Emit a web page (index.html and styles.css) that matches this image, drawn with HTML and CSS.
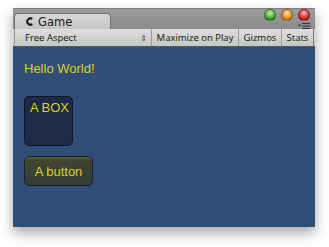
FILE: index.html
```html
<!DOCTYPE html>
<html lang="en">
<head>
    <meta charset="UTF-8">
    <title>Game</title>
    <link rel="stylesheet" href="styles.css">
</head>
<body>

    <div class="window">
        <!-- Tab strip -->
        <div class="titlebar">
            <div class="tab">
                <svg class="tab-icon" width="9" height="9" viewBox="0 0 9 9">
                    <path d="M8 1 A4.3 4.3 0 1 0 8 8 L6.3 6.2 A2 2 0 1 1 6.3 2.8 Z" fill="#1a1a1a"/>
                </svg>
                <span>Game</span>
            </div>
            <div class="lights">
                <span class="light green"></span>
                <span class="light orange"></span>
                <span class="light red"></span>
            </div>
            <div class="menu-icon">
                <svg width="12" height="6" viewBox="0 0 12 6">
                    <path d="M0 1.5 L3 1.5 L1.5 3.5 Z" fill="#333"/>
                    <rect x="4" y="0" width="8" height="1" fill="#333"/>
                    <rect x="4" y="2.5" width="8" height="1" fill="#333"/>
                    <rect x="4" y="5" width="8" height="1" fill="#333"/>
                </svg>
            </div>
        </div>

        <!-- Toolbar -->
        <div class="toolbar">
            <div class="tool aspect">
                <span>Free Aspect</span>
                <span class="updown">&#8661;</span>
            </div>
            <div class="tool maximize">Maximize on Play</div>
            <div class="tool gizmos">Gizmos</div>
            <div class="tool stats">Stats</div>
        </div>

        <!-- Game view -->
        <div class="game">
            <div class="hello">Hello World!</div>
            <div class="box">A BOX</div>
            <button class="gbutton">A button</button>
        </div>
    </div>

</body>
</html>
```

FILE: styles.css
```css
/* Global Styles */
body, html {
    margin: 0;
    padding: 0;
    background: #ffffff;
}

body {
    padding: 8px 0 20px 13px;
    font-family: "DejaVu Sans", Arial, sans-serif;
}

/* Window */
.window {
    width: 302px;
    height: 219px;
    display: flex;
    flex-direction: column;
    background: #8e8e8e;
    box-shadow: 0 6px 12px rgba(0, 0, 0, 0.35);
}

/* Title / tab strip */
.titlebar {
    height: 21px;
    flex-shrink: 0;
    display: flex;
    align-items: flex-end;
    position: relative;
    background: linear-gradient(#9c9c9c, #8a8a8a);
    border-top: 1px solid #7c7c7c;
    box-sizing: border-box;
}

.tab {
    margin-left: 1px;
    width: 97px;
    height: 16px;
    box-sizing: border-box;
    padding-left: 10px;
    display: flex;
    align-items: center;
    gap: 4px;
    background: linear-gradient(#d8d8d8, #c4c4c4);
    border: 1px solid #6f6f6f;
    border-bottom: none;
    border-radius: 4px 4px 0 0;
    font-size: 11.5px;
    color: #1a1a1a;
}

.lights {
    position: absolute;
    right: 5px;
    top: 0;
    display: flex;
    gap: 5px;
}

.light {
    width: 12px;
    height: 12px;
    border-radius: 50%;
    border: 1px solid rgba(0, 0, 0, 0.35);
    box-sizing: border-box;
}

.light.green {
    background: radial-gradient(circle at 50% 30%, #c4f5a8, #3f9c2c 65%, #2c7a1c);
}

.light.orange {
    background: radial-gradient(circle at 50% 30%, #ffe6a4, #d8841e 65%, #b0600e);
}

.light.red {
    background: radial-gradient(circle at 50% 30%, #ffb6b6, #d01c1c 65%, #a40e0e);
}

.menu-icon {
    position: absolute;
    right: 5px;
    top: 14px;
    line-height: 0;
}

/* Toolbar */
.toolbar {
    height: 18px;
    flex-shrink: 0;
    display: flex;
    background: linear-gradient(#dedede, #c6c6c6);
    border-bottom: 1px solid #5a5a5a;
    box-sizing: border-box;
    font-family: "Open Sans", "DejaVu Sans", sans-serif;
    font-size: 9.5px;
    color: #111;
}

.tool {
    display: flex;
    align-items: center;
    justify-content: center;
    border-right: 1px solid #9a9a9a;
    box-sizing: border-box;
    white-space: nowrap;
}

.tool.aspect {
    width: 138px;
    margin-left: 1px;
    padding: 0 4px 0 10px;
    justify-content: space-between;
    border-left: 1px solid #9a9a9a;
}

.updown {
    font-size: 8px;
    color: #444;
}

.tool.maximize {
    width: 87px;
}

.tool.gizmos {
    width: 43px;
}

.tool.stats {
    width: 32px;
    border-right: 1px solid #777;
}

/* Game view */
.game {
    flex: 1;
    background: #314e7a;
    padding: 14px 0 0 11px;
    display: flex;
    flex-direction: column;
    align-items: flex-start;
    font-family: "Liberation Sans", Arial, sans-serif;
    color: #dcd21c;
}

.hello {
    font-size: 13px;
    line-height: 15px;
}

.box {
    margin-top: 20px;
    width: 49px;
    height: 50px;
    box-sizing: border-box;
    padding: 3px 0 0 2px;
    text-align: center;
    font-size: 13px;
    background: #1e2b48;
    border: 1px solid #0f1627;
    border-radius: 5px;
}

.gbutton {
    margin-top: 10px;
    width: 69px;
    height: 30px;
    font-family: "Liberation Sans", Arial, sans-serif;
    font-size: 13px;
    color: #dcd21c;
    background: linear-gradient(#5d603e 0, #41462f 3px, #3b4134 45%, #343c37 100%);
    border: 1px solid #1a1f27;
    border-radius: 5px;
    padding: 0;
}
```
